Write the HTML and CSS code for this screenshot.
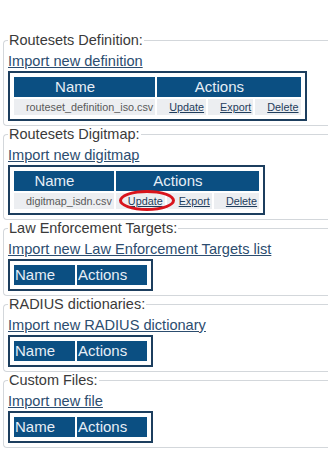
FILE: index.html
```html
<!DOCTYPE html>
<html lang="en">
<head>
    <meta charset="UTF-8">
    <title>Import Files</title>
    <link rel="stylesheet" href="styles.css">
</head>
<body>

    <!-- Routesets definition -->
    <fieldset class="box">
        <legend>Routesets Definition:</legend>
        <div class="import"><a href="#">Import new definition</a></div>
        <table class="files">
            <tr><th>Name</th><th colspan="3">Actions</th></tr>
            <tr>
                <td class="fname">routeset_definition_iso.csv</td>
                <td><a href="#">Update</a></td>
                <td><a href="#">Export</a></td>
                <td><a href="#">Delete</a></td>
            </tr>
        </table>
    </fieldset>

    <!-- Routesets digitmap -->
    <fieldset class="box">
        <legend>Routesets Digitmap:</legend>
        <div class="import"><a href="#">Import new digitmap</a></div>
        <table class="files">
            <tr><th>Name</th><th colspan="3">Actions</th></tr>
            <tr>
                <td class="fname">digitmap_isdn.csv</td>
                <td class="marked"><a href="#">Update</a><span class="circle"></span></td>
                <td><a href="#">Export</a></td>
                <td><a href="#">Delete</a></td>
            </tr>
        </table>
    </fieldset>

    <!-- Law enforcement -->
    <fieldset class="box">
        <legend>Law Enforcement Targets:</legend>
        <div class="import"><a href="#">Import new Law Enforcement Targets list</a></div>
        <table class="files">
            <tr><th>Name</th><th>Actions</th></tr>
        </table>
    </fieldset>

    <!-- Radius -->
    <fieldset class="box">
        <legend>RADIUS dictionaries:</legend>
        <div class="import"><a href="#">Import new RADIUS dictionary</a></div>
        <table class="files">
            <tr><th>Name</th><th>Actions</th></tr>
        </table>
    </fieldset>

    <!-- Custom files -->
    <fieldset class="box">
        <legend>Custom Files:</legend>
        <div class="import"><a href="#">Import new file</a></div>
        <table class="files">
            <tr><th>Name</th><th>Actions</th></tr>
        </table>
    </fieldset>

</body>
</html>
```
FILE: styles.css
```css
/* page */
body {
    margin: 0;
    padding: 32px 0 0 3px;
    background: #fff;
    font-family: "Liberation Sans", Arial, sans-serif;
    color: #3c3c3c;
}
/* fieldset boxes (right edge runs off the page) */
.box {
    margin: 0;
    padding: 0 4px 4px 4px;
    border: 1px solid #d3d7db;
    border-right: none;
    border-radius: 4px 0 0 4px;
}
.box legend {
    padding: 0 1px;
    font-size: 14.5px;
    line-height: 16px;
    color: #3a3a3a;
}
.import {
    padding-top: 4px;
    font-size: 14.6px;
    line-height: 18px;
}
.import a {
    color: #2c4d6f;
}
/* file tables */
.files {
    margin-top: 1px;
    border: 2px solid #1c3e5e;
    padding: 2px;
    border-spacing: 2px;
}
.files th {
    background: #0b4f82;
    color: #e6eef6;
    font-weight: normal;
    font-size: 15px;
    line-height: 20px;
    padding: 0 20px 0 1px;
    text-align: center;
    white-space: nowrap;
}
.files td {
    background: #eceef1;
    font-size: 10.8px;
    line-height: 16px;
    padding: 0 2px 0 12px;
    white-space: nowrap;
}
.files td.fname {
    color: #5a5a5a;
}
.files td a {
    color: #1f3d5c;
}
/* red mark around update */
.marked {
    position: relative;
}
.circle {
    position: absolute;
    left: 3px;
    top: -3px;
    width: 50px;
    height: 15px;
    border: 3px solid #d9141c;
    border-radius: 50%;
}
```
